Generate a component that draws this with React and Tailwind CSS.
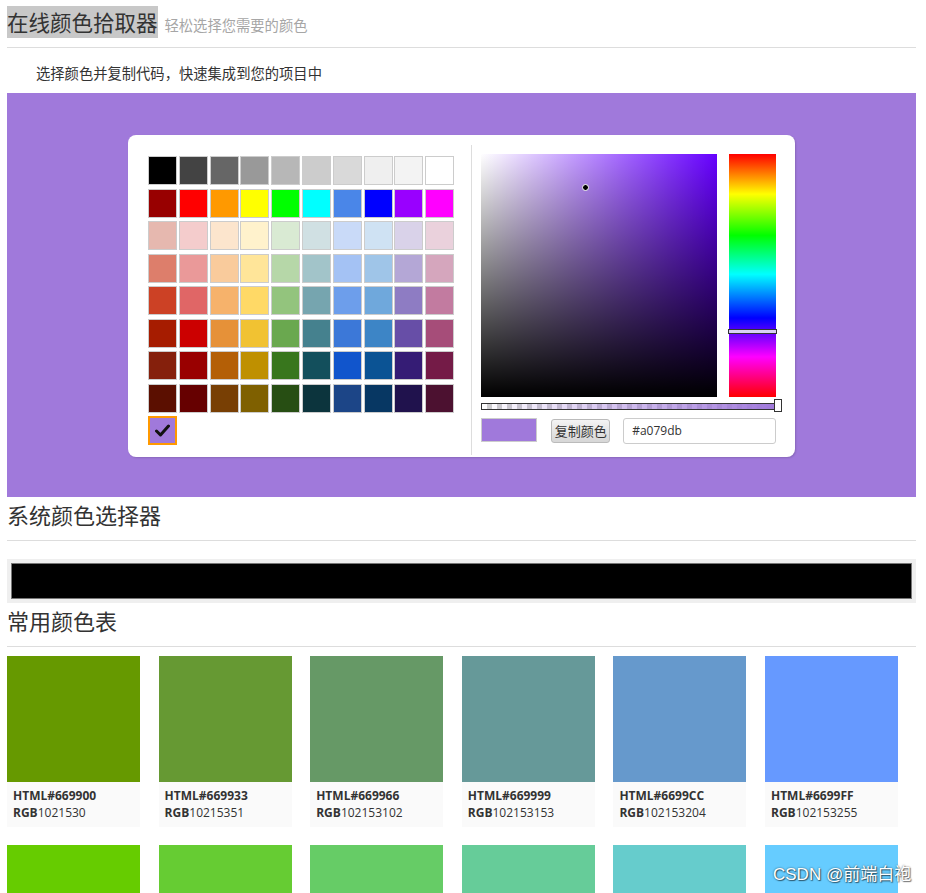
import React from 'react';

const cjk = { fontFamily: '"Noto Sans CJK SC", "Noto Sans", sans-serif' };

const palette = [
  ['#000000', '#434343', '#666666', '#999999', '#b7b7b7', '#cccccc', '#d9d9d9', '#efefef', '#f3f3f3', '#ffffff'],
  ['#980000', '#ff0000', '#ff9900', '#ffff00', '#00ff00', '#00ffff', '#4a86e8', '#0000ff', '#9900ff', '#ff00ff'],
  ['#e6b8af', '#f4cccc', '#fce5cd', '#fff2cc', '#d9ead3', '#d0e0e3', '#c9daf8', '#cfe2f3', '#d9d2e9', '#ead1dc'],
  ['#dd7e6b', '#ea9999', '#f9cb9c', '#ffe599', '#b6d7a8', '#a2c4c9', '#a4c2f4', '#9fc5e8', '#b4a7d6', '#d5a6bd'],
  ['#cc4125', '#e06666', '#f6b26b', '#ffd966', '#93c47d', '#76a5af', '#6d9eeb', '#6fa8dc', '#8e7cc3', '#c27ba0'],
  ['#a61c00', '#cc0000', '#e69138', '#f1c232', '#6aa84f', '#45818e', '#3c78d8', '#3d85c6', '#674ea7', '#a64d79'],
  ['#85200c', '#990000', '#b45f06', '#bf9000', '#38761d', '#134f5c', '#1155cc', '#0b5394', '#351c75', '#741b47'],
  ['#5b0f00', '#660000', '#783f04', '#7f6000', '#274e13', '#0c343d', '#1c4587', '#073763', '#20124d', '#4c1130'],
];

// second row only shows its colour block inside the frame
const cards = [
  ['669900', '1021530'],
  ['669933', '10215351'],
  ['669966', '102153102'],
  ['669999', '102153153'],
  ['6699CC', '102153204'],
  ['6699FF', '102153255'],
  ['66CC00'],
  ['66CC33'],
  ['66CC66'],
  ['66CC99'],
  ['66CCCC'],
  ['66CCFF'],
];

function Palette() {
  return (
    <div className="grid grid-cols-[repeat(10,29px)] gap-x-[1.8px] gap-y-[3.5px]">
      {palette.flat().map((c, i) => (
        <div key={i} className="w-[29px] h-[29px] border border-[#cccccc]" style={{ backgroundColor: c }} />
      ))}
      <div className="w-[29px] h-[29px] border-2 border-[#ff9900] bg-[#a079db] flex items-center justify-center">
        <svg width="15" height="13" viewBox="0 0 15 13">
          <path d="M1.5 7 L5.5 11 L13.5 2" fill="none" stroke="#111" strokeWidth="3" strokeLinecap="round" strokeLinejoin="round" />
        </svg>
      </div>
    </div>
  );
}

function Picker() {
  return (
    <div className="w-[301px] pt-[19px]">
      <div className="flex gap-[12px]">
        <div className="relative w-[236px] h-[243px] bg-[#6600ff]">
          <div className="absolute inset-0 bg-[linear-gradient(to_right,#ffffff,rgba(255,255,255,0))]" />
          <div className="absolute inset-0 bg-[linear-gradient(to_top,#000000,rgba(0,0,0,0))]" />
          <div className="absolute left-[101px] top-[30px] w-[7px] h-[7px] rounded-full bg-black border border-white" />
        </div>
        <div className="relative w-[47px] h-[243px] bg-[linear-gradient(to_bottom,#ff0000_0%,#ffff00_16.5%,#00ff00_33.5%,#00ffff_49.5%,#0000ff_67.5%,#ff00ff_83.5%,#ff0000_100%)]">
          <div className="absolute left-[-1px] right-[-1px] top-[175px] h-[5px] border border-[#333] bg-[#d9cdf6]" />
        </div>
      </div>
      <div className="relative mt-[6px] h-[7px] w-[296px] border border-[#333] bg-[repeating-conic-gradient(#cfcfcf_0_25%,#ffffff_0_50%)] bg-[length:10px_10px]">
        <div className="absolute inset-0 bg-[linear-gradient(to_right,rgba(160,121,219,0),#a079db)]" />
        <div className="absolute right-[-6px] top-[-5px] w-[8px] h-[13px] border border-[#333] bg-white" />
      </div>
      <div className="mt-[8px] flex items-start">
        <div className="w-[56px] h-[24px] border border-[#cccccc] bg-[#a079db]" />
        <button
          className="ml-[14px] mt-[1px] w-[59px] h-[24px] rounded-[3px] border border-[#bbbbbb] bg-[linear-gradient(to_bottom,#f4f4f4,#d6d6d6)] text-[13px] leading-[22px] text-[#333]"
          style={cjk}
        >
          复制颜色
        </button>
        <div
          className="ml-[13px] w-[153px] h-[26px] rounded-[3px] border border-[#cccccc] pl-[8px] text-[12px] leading-[24px] text-[#333]"
          style={{ fontFamily: '"Open Sans", "Liberation Sans", sans-serif' }}
        >
          #a079db
        </div>
      </div>
    </div>
  );
}

function Card({ hex, rgb }) {
  return (
    <div className="w-[133px]">
      <div className="h-[126px]" style={{ backgroundColor: '#' + hex }} />
      {rgb && (
        <div className="h-[45px] bg-[#fafafa] pl-[6px] pt-[5px] text-[12px] leading-[17px] text-[#333]" style={{ fontFamily: '"Open Sans", "Noto Sans", sans-serif' }}>
          <div className="font-bold">HTML#{hex}</div>
          <div>
            <span className="font-bold">RGB</span>
            {rgb}
          </div>
        </div>
      )}
    </div>
  );
}

export default function App() {
  return (
    <div className="relative bg-white h-[893px] overflow-hidden" style={cjk}>
      <div className="ml-[7px] w-[909px] pt-[6px]">
        <div className="flex items-baseline h-[32px]">
          <span className="h-[32px] leading-[32px] text-[21.5px] text-[#333] bg-[#c8c8c8]">在线颜色拾取器</span>
          <span className="ml-[7px] text-[14.3px] text-[#a6a6a6]">轻松选择您需要的颜色</span>
        </div>
        <div className="mt-[9px] border-t border-[#dddddd]" />
        <p className="mt-[15px] pl-[29px] text-[14.3px] leading-[20px] text-[#333]">选择颜色并复制代码，快速集成到您的项目中</p>

        <div className="mt-[10px] h-[404px] bg-[#a079db] pt-[42px] flex justify-center">
          <div className="w-[667px] h-[322px] rounded-[8px] bg-white shadow-[1px_1px_2px_rgba(0,0,0,0.15)] flex">
            <div className="pl-[20px] pt-[21px]">
              <Palette />
            </div>
            <div className="ml-[17px] mt-[10px] h-[310px] w-px bg-[#dddddd]" />
            <div className="ml-[9px]">
              <Picker />
            </div>
          </div>
        </div>

        <h2 className="mt-[1px] h-[32px] text-[22px] leading-[32px] text-[#333]">系统颜色选择器</h2>
        <div className="mt-[10px] border-t border-[#dddddd]" />
        <div className="mt-[18px] h-[44px] bg-[#efefef] p-[4px]">
          <div className="h-[36px] bg-black border border-[#777]" />
        </div>

        <h2 className="mt-[1px] h-[32px] text-[22px] leading-[32px] text-[#333]">常用颜色表</h2>
        <div className="mt-[10px] border-t border-[#dddddd]" />
        <div className="mt-[9px] grid grid-cols-[repeat(6,133px)] gap-x-[18.6px] gap-y-[18px]">
          {cards.map(([hex, rgb]) => (
            <Card key={hex} hex={hex} rgb={rgb} />
          ))}
        </div>
      </div>

      <div
        className="absolute left-[773px] top-[862px] text-[17px] text-white [text-shadow:0_0_2px_rgba(0,0,0,0.6),1px_1px_1px_rgba(0,0,0,0.5)]"
        style={{ fontFamily: '"Liberation Sans", "Noto Sans CJK SC", sans-serif' }}
      >
        CSDN @前端白袍
      </div>
    </div>
  );
}
